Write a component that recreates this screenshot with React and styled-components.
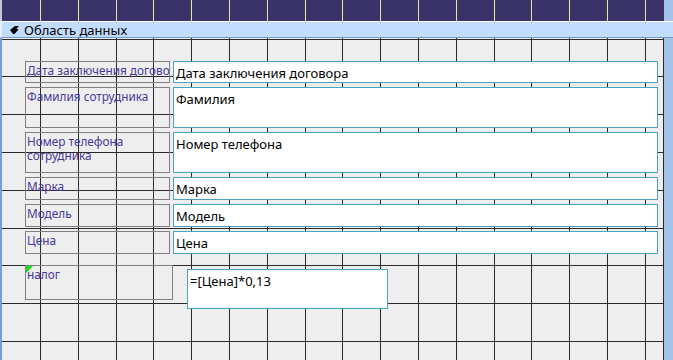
import React from "react";
import styled, { createGlobalStyle } from "styled-components";

const STEP = 37.8;

const GlobalStyle = createGlobalStyle`
  html, body {
    margin: 0;
    padding: 0;
    background: #eeeeee;
    overflow: hidden;
  }
  #root {
    width: 673px;
    height: 360px;
  }
`;

const Window = styled.div`
  width: 673px;
  height: 360px;
  display: flex;
  flex-direction: column;
  overflow: hidden;
  font-family: "Noto Sans", "Open Sans", sans-serif;
`;

const Ruler = styled.div`
  height: 21px;
  flex: none;
  display: flex;
`;

const RulerLeft = styled.div`
  width: 2px;
  background: #c7c7d2;
`;

const RulerTrack = styled.div`
  flex: 1;
  position: relative;
  background: #39336a;
  overflow: hidden;
`;

const SideStrip = styled.div`
  width: 9px;
  flex: none;
  background: #a4c3e9;
  border-left: 1px solid ${(p) => p.$line || "#2a2a2a"};
`;

const SectionBar = styled.div`
  height: 15px;
  flex: none;
  display: flex;
  align-items: center;
  gap: 5px;
  padding-left: 8px;
  background: #c2dcfd;
  border-top: 1px solid #ffffff;
  border-bottom: 1px solid #6f97d1;
  border-left: 2px solid #e9eef7;
  font-size: 13px;
  color: #000;
  white-space: nowrap;
`;

const Body = styled.div`
  flex: 1;
  display: flex;
  min-height: 0;
`;

const LeftEdge = styled.div`
  width: 2px;
  flex: none;
  background: #6f9fe0;
`;

const Canvas = styled.div`
  flex: 1;
  position: relative;
  background: #eeeeee;
  overflow: hidden;
`;

const Lines = styled.svg`
  position: absolute;
  left: 0;
  top: 0;
  width: 100%;
  height: 100%;
  shape-rendering: crispEdges;
`;

const Form = styled.div`
  position: relative;
  display: flex;
  flex-direction: column;
  gap: 4px;
  padding: 23px 0 0 23px;
`;

const Row = styled.div`
  display: flex;
  align-items: flex-start;
  gap: ${(p) => p.$gap || 3}px;
  margin-top: ${(p) => p.$offset || 0}px;
`;

const Label = styled.div`
  position: relative;
  box-sizing: border-box;
  width: ${(p) => p.$w || 145}px;
  height: ${(p) => p.$h}px;
  border: 1px solid #808080;
  padding: 1px 0 0 1px;
  font-size: 11.8px;
  line-height: 14px;
  color: #47399a;
  overflow: hidden;
  white-space: ${(p) => (p.$nowrap ? "nowrap" : "normal")};

  ${(p) =>
    p.$marked &&
    `
    &::before {
      content: "";
      position: absolute;
      left: 0;
      top: 0;
      border-top: 7px solid #18e018;
      border-right: 7px solid transparent;
    }
  `}
`;

const Field = styled.div`
  box-sizing: border-box;
  width: ${(p) => p.$w || 485}px;
  height: ${(p) => p.$h}px;
  margin-top: ${(p) => p.$top || 0}px;
  border: 1px solid #4ba4bc;
  background: #ffffff;
  padding: 2px 0 0 2px;
  font-size: 13px;
  line-height: 18px;
  color: #000;
  overflow: hidden;
  white-space: nowrap;
`;

function SectionIcon() {
  return (
    <svg width="9" height="8" viewBox="0 0 9 8">
      <path d="M0 4 L5 0 H9 L6.5 2.5 L8.5 3.5 L4.5 8 H3 Z" fill="#000" />
    </svg>
  );
}

function RulerTicks() {
  const xs = [];
  for (let i = 0; i < 18; i++) xs.push(Math.round(40 + STEP * i) - 2);
  return (
    <Lines>
      {xs.map((x) => (
        <rect key={x} x={x} y={0} width={1} height={21} fill="#efe3a0" />
      ))}
    </Lines>
  );
}

function GridLines() {
  const xs = [];
  const ys = [];
  for (let i = 0; i < 18; i++) xs.push(Math.round(40 + STEP * i) - 2);
  for (let k = 0; k < 9; k++) ys.push(Math.round(STEP * k + 0.6));
  return (
    <Lines>
      {xs.map((x) => (
        <rect key={"v" + x} x={x} y={0} width={1} height={400} fill="#2b2b2b" />
      ))}
      {ys.map((y) => (
        <rect key={"h" + y} x={0} y={y} width={700} height={1} fill="#2b2b2b" />
      ))}
    </Lines>
  );
}

const rows = [
  { label: "Дата заключения договора", field: "Дата заключения договора", h: 22, nowrap: true },
  { label: "Фамилия сотрудника", field: "Фамилия", h: 41 },
  { label: "Номер телефона сотрудника", field: "Номер телефона", h: 41 },
  { label: "Марка", field: "Марка", h: 23 },
  { label: "Модель", field: "Модель", h: 23 },
  { label: "Цена", field: "Цена", h: 23 },
];

export default function App() {
  return (
    <>
      <GlobalStyle />
      <Window>
        <Ruler>
          <RulerLeft />
          <RulerTrack>
            <RulerTicks />
          </RulerTrack>
          <SideStrip $line="#39336a" />
        </Ruler>
        <SectionBar>
          <SectionIcon />
          Область данных
        </SectionBar>
        <Body>
          <LeftEdge />
          <Canvas>
            <GridLines />
            <Form>
              {rows.map((r) => (
                <Row key={r.field}>
                  <Label $h={r.h} $nowrap={r.nowrap}>
                    {r.label}
                  </Label>
                  <Field $h={r.h}>{r.field}</Field>
                </Row>
              ))}
              <Row $offset={7} $gap={14}>
                <Label $h={35} $w={148} $marked>
                  налог
                </Label>
                <Field $h={40} $w={201} $top={4}>
                  =[Цена]*0,13
                </Field>
              </Row>
            </Form>
          </Canvas>
          <SideStrip />
        </Body>
      </Window>
    </>
  );
}
